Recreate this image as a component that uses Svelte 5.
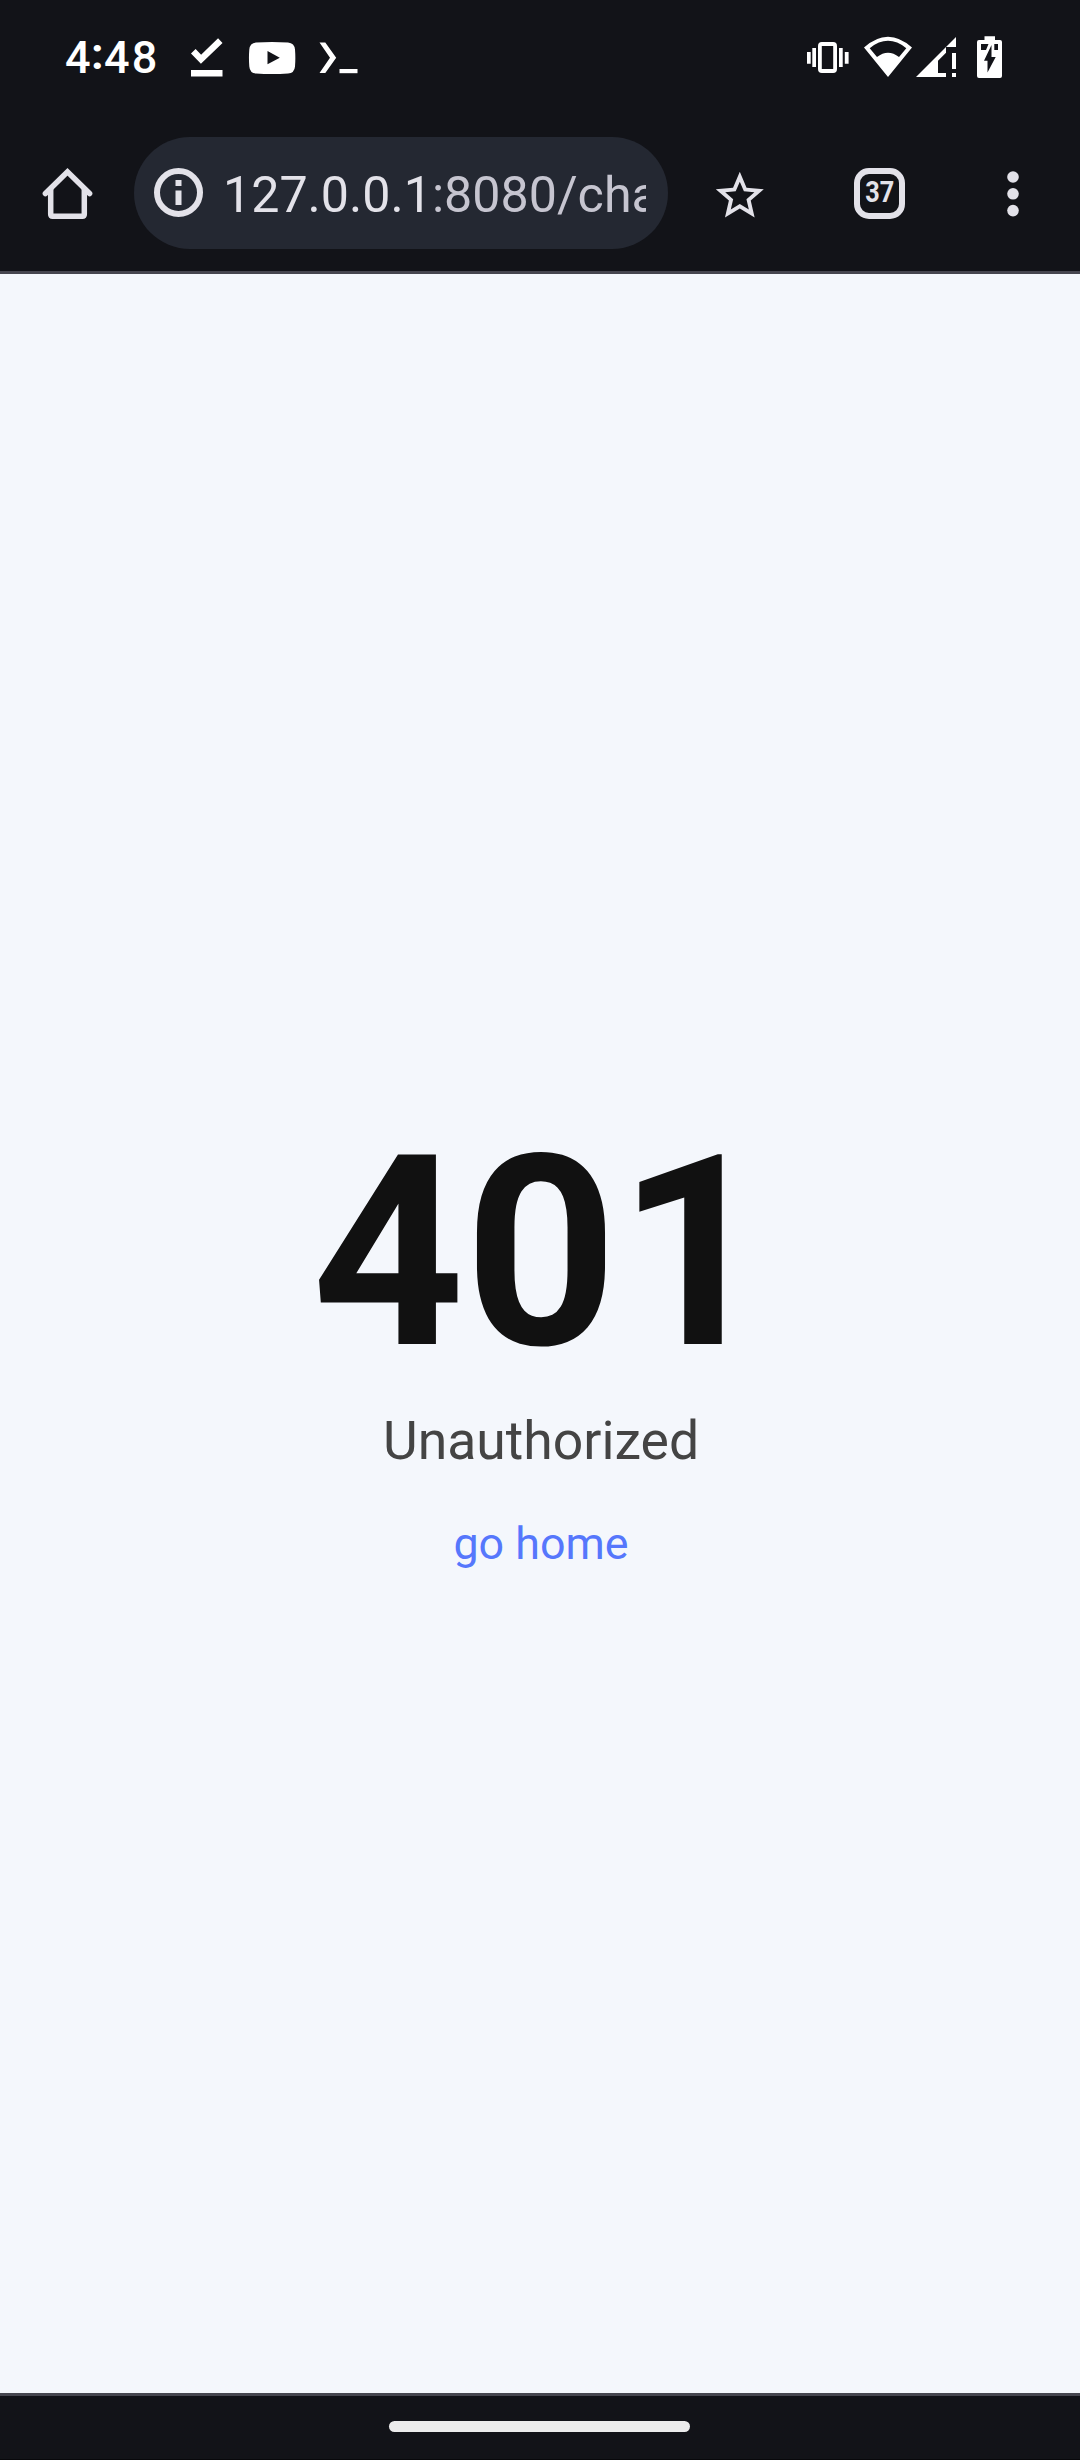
<script>
  const tabs = 37;
</script>

<div class="screen">
  <header class="status">
    <span class="time">4<span class="colon">:</span>48</span>
    <svg class="notes" viewBox="186 30 180 54">
      <path d="M193.3 51.3 201 59.3 220.3 40.6" fill="none" stroke="#fff" stroke-width="6.4" />
      <rect x="191" y="70" width="31.5" height="6.5" />
      <path fill-rule="evenodd" d="M256 42.4Q272 41.4 288 42.4Q294.5 43 295 49.500Q295.700 58 295 66.500Q294.500 73 288 73.600Q272 74.600 256 73.600Q249.800 73 249.300 66.500Q248.600 58 249.300 49.500Q249.800 43 256 42.400ZM267.500 51V64.300L279.800 57.700Z" />
      <path d="M319.500 42.500H325.300L336.200 57.700 325.300 73H319.500L330 57.700Z" />
      <rect x="339.500" y="69" width="18" height="4.200" />
    </svg>
    <svg class="system" viewBox="800 30 210 54">
      <rect x="819.900" y="44" width="15.200" height="27" rx="2" fill="none" stroke="#fff" stroke-width="3.800" />
      <path d="M807 52h3.700v11.700H807zM812.300 48h3.700v19h-3.700zM839 48h3.700v19H839zM844.800 52h3.800v11.700h-3.800z" />
      <path fill-rule="evenodd" d="M864 47.500Q888 26 912 47.500L888 77ZM869.700 48.200 877 57Q888 48.500 899 57L906.300 48.200Q888 33.500 869.700 48.200Z" />
      <path d="M916 77 956 37V47H946V52.700L938 60.700V73H946V77ZM952 53h4v16h-4zM952 73h4v4h-4z" />
      <path d="M984.500 36.300H995V40H1000Q1002 40 1002 42V76Q1002 78 1000 78H979Q977 78 977 76V42Q977 40 979 40H984.500Z" />
      <path class="cut" d="M981 44h7.500l-2.500 6h-5zM994.300 44h3.700v6h-3.700zM991.500 45V57H995.700L987.500 72.500V60.700H984Z" />
    </svg>
  </header>

  <div class="toolbar">
    <svg class="home" viewBox="0 0 52 52">
      <path d="M3.400 25.500 25.500 3.900 47.600 25.500" stroke-linecap="round" />
      <path d="M8.700 21V46.200Q8.700 48.200 10.700 48.200H40.300Q42.300 48.200 42.300 46.200V21" />
    </svg>
    <div class="address">
      <svg class="info" viewBox="0 0 49 49">
        <circle cx="24.500" cy="24.500" r="21.500" />
        <path d="M24.500 12v6M24.500 22.500v14.500" />
      </svg>
      <div class="url">127.0.0.1<span>:8080/cha</span></div>
    </div>
    <svg class="star" viewBox="0 0 24 24">
      <path d="M22 9.240l-7.190-.620L12 2 9.190 8.630 2 9.240l5.460 4.730L5.820 21 12 17.270 18.180 21l-1.630-7.030L22 9.240zM12 15.400l-3.760 2.270 1-4.280-3.320-2.880 4.380-.380L12 6.100l1.710 4.040 4.380.380-3.320 2.880 1 4.280L12 15.400z" />
    </svg>
    <div class="tabs"><span>{tabs}</span></div>
    <svg class="menu" viewBox="0 0 12 46">
      <circle cx="6" cy="6" r="5.800" /><circle cx="6" cy="22.800" r="5.800" /><circle cx="6" cy="39.600" r="5.800" />
    </svg>
  </div>

  <main>
    <h1>401</h1>
    <p>Unauthorized</p>
    <a href="#home">go home</a>
  </main>

  <footer><div class="handle"></div></footer>
</div>

<style>
  :global(body) { margin: 0; background: #121318; }
  .screen {
    width: 1080px;
    height: 2460px;
    display: flex;
    flex-direction: column;
    overflow: hidden;
    background: #121318;
    font-family: Roboto, sans-serif;
  }
  svg { display: block; flex: none; }
  .status {
    height: 114px;
    box-sizing: border-box;
    padding: 30px 70px 0 65px;
    display: flex;
    align-items: flex-start;
    color: #fff;
    fill: #fff;
  }
  .time {
    width: 121px;
    font-size: 45px;
    line-height: 56px;
    font-weight: 500;
    letter-spacing: 2.200px;
    white-space: nowrap;
  }
  .colon { vertical-align: 4px; line-height: 1; font-weight: 700; margin: 0 -1.800px 0 -1.800px; }
  .notes { width: 180px; height: 54px; }
  .system { width: 210px; height: 54px; margin-left: auto; }
  .cut { fill: #121318; }
  .toolbar {
    height: 160px;
    box-sizing: border-box;
    border-bottom: 3px solid #46464f;
    padding: 23px 60px 0 42px;
    display: flex;
    align-items: flex-start;
  }
  .home {
    width: 52px;
    height: 52px;
    margin-top: 31px;
    fill: none;
    stroke: #e3e2e9;
    stroke-width: 5.500;
  }
  .address {
    width: 534px;
    height: 112px;
    box-sizing: border-box;
    margin-left: 40px;
    padding: 0 22px 0 20px;
    border-radius: 56px;
    background: #242832;
    display: flex;
    align-items: flex-start;
  }
  .info {
    width: 49px;
    height: 49px;
    margin-top: 31px;
    fill: none;
    stroke: #e3e2e9;
    stroke-width: 6;
  }
  .url {
    margin-left: 20px;
    width: 423px;
    overflow: hidden;
    white-space: nowrap;
    font-size: 50.200px;
    line-height: 116px;
    color: #e3e2e9;
  }
  .url span { color: #c6c5d0; }
  .star { width: 57.600px; height: 57.600px; margin: 30.200px 0 0 43.200px; fill: #e3e2e9; }
  .tabs {
    width: 51px;
    height: 51px;
    box-sizing: border-box;
    margin: 31px 0 0 85.200px;
    border: 6px solid #e3e2e9;
    border-radius: 15px;
    display: flex;
    justify-content: center;
    color: #e3e2e9;
    font-size: 29px;
    font-weight: 700;
    line-height: 37px;
  }
  .tabs span { transform: scaleX(.87); }
  .menu { width: 12px; height: 46px; margin: 34px 0 0 102.500px; fill: #e3e2e9; }
  main {
    flex: 1;
    background: #f4f7fc;
    display: flex;
    flex-direction: column;
    align-items: center;
    padding: 824px 0 0 2px;
  }
  h1 { margin: 0; font-size: 266.500px; line-height: 310px; font-weight: 700; color: #111; }
  p { margin: 1px 0 0; font-size: 53.500px; line-height: 64px; color: #444; }
  a { margin-top: 44px; font-size: 44.800px; line-height: 54px; color: #5677fc; text-decoration: none; }
  footer {
    height: 67px;
    box-sizing: border-box;
    border-top: 3px solid #46464f;
    border-bottom: 1px solid #08080b;
    padding-top: 25px;
    display: flex;
    justify-content: center;
    align-items: flex-start;
  }
  .handle { width: 301px; height: 11px; border-radius: 6px; background: #ececec; margin-right: 1px; }
</style>
